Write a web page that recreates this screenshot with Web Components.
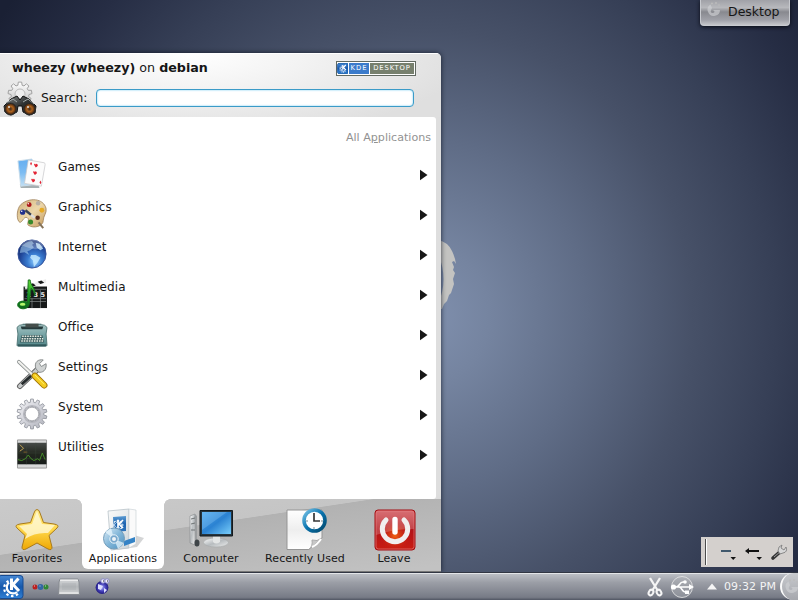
<!DOCTYPE html>
<html lang="en"><head><meta charset="utf-8"><title>KDE Desktop</title>
<style>html,body{margin:0;width:798px;height:600px;overflow:hidden;font-family:"DejaVu Sans",sans-serif;font-size:12px;color:#161616}</style></head>
<body><kde-desktop></kde-desktop>
<script>
const define=(name,html,setup)=>customElements.define(name,class extends HTMLElement{
 constructor(){super();const t=document.createElement('template');t.innerHTML=html;this.attachShadow({mode:'open'}).append(t.content.cloneNode(true));}
 connectedCallback(){if(setup)setup(this,this.shadowRoot);}
});
const gear=(cx,cy,r,n,depth)=>{let p='';for(let i=0;i<n;i++){const a=i*2*Math.PI/n,s=2*Math.PI/n;[[-.34,r-depth],[-.2,r],[.2,r],[.34,r-depth]].forEach(([o,q],j)=>{p+=(i||j?'L':'M')+(cx+q*Math.sin(a+o*s)).toFixed(2)+' '+(cy-q*Math.cos(a+o*s)).toFixed(2)});}return p+'Z';};
const G=(id,a,b,c,x2=0)=>`<linearGradient id="${id}" x1="0" y1="0" x2="${x2}" y2="1"><stop stop-color="${a}"/><stop offset=".5" stop-color="${b}"/><stop offset="1" stop-color="${c||b}"/></linearGradient>`;
const icons={
search:[34,34,`<defs>${G('a','#fff','#ddd','#bbb')}${G('b','#8a8d8d','#303333','#0c0d0d',1)}<radialGradient id="c"><stop stop-color="#3b2a20"/><stop offset=".45" stop-color="#b0641d"/><stop offset=".75" stop-color="#653815"/><stop offset="1" stop-color="#111"/></radialGradient></defs>
<path d="${gear(17,12,12,9,3)}" fill="url(#a)" stroke="#a1a1a1"/><circle cx="17" cy="12" r="5" fill="#eee" stroke="#bbb"/>
<path d="M8 17L14 14L17 18L20 14L26 17L33 24L32 31L26 33L20 30L19 24H15L14 30L8 33L2 30L1 24Z" fill="url(#b)" stroke="#111"/><path d="M3 21L10 17L14 20M20 20L25 17L31 22" stroke="#a3aaaa" fill="none"/><circle cx="7.5" cy="27" r="6" fill="url(#c)" stroke="#303232"/><circle cx="26.5" cy="27" r="6" fill="url(#c)" stroke="#303232"/><circle cx="6" cy="25" r="1" fill="#ddd"/><circle cx="25" cy="25" r="1" fill="#ddd"/>`],
games:[32,32,`<defs>${G('a','#64aef0','#7cbcf2','#c2dff3')}</defs><path d="M3 27L23 28L24 31L4 31Z" fill="#a6afb1"/><path d="M1 2L16 0L21 27L4 29Z" fill="url(#a)" stroke="#c8dcea"/><path d="M12 1L29 4Q30 4 30 6L26 29L8 26Z" fill="#fcfcfc" stroke="#c9c9cc" stroke-width=".8"/><g fill="#e32535"><path id="h" d="M20 9Q17 5 19 5Q20 5 20 6Q21 4 22 6Q23 7 20 9Z"/><use href="#h" x="-1" y="8"/><use href="#h" x="-3" y="16"/><path d="M14 5l1-2 1 2-1 2ZM24 25l1-2 1 2-1 2Z"/></g>`],
graphics:[32,32,`<defs>${G('a','#d0b27b','#ecd7aa','#c59a5c',1)}</defs><path d="M4 6C13-2 28-1 31 10C32 15 28 18 28 23C28 29 18 32 12 28C10 26 14 22 11 20C7 17 5 28 2 24C-1 20 0 10 4 6Z" fill="url(#a)" stroke="#9a7950" stroke-width=".8"/><circle cx="13" cy="6" r="2.6" fill="#ad1b1b"/><circle cx="22.5" cy="4.5" r="2.4" fill="#b8b0a4"/><circle cx="26.5" cy="12" r="2.6" fill="#e6aa24"/><circle cx="6" cy="14" r="2.8" fill="#20308e"/><circle cx="22" cy="20" r="2.4" fill="#582b1b"/><circle cx="14.5" cy="24.5" r="2.7" fill="#388a2b"/><path d="M9 12L15 17" stroke="#374055" stroke-width="2.6"/><path d="M15 17L19 20" stroke="#ddd" stroke-width="2.4"/><path d="M23 25L28 31" stroke="#86745b" stroke-width="2.2"/><circle cx="12" cy="5" r=".8" fill="#fff"/><circle cx="5" cy="13" r=".8" fill="#fff"/>`],
internet:[32,32,`<defs><radialGradient id="a" cx=".6" cy=".75" r=".75"><stop stop-color="#8fcdff"/><stop offset=".35" stop-color="#3a7cd0"/><stop offset=".7" stop-color="#214799"/><stop offset="1" stop-color="#102766"/></radialGradient></defs><circle cx="16" cy="16" r="15" fill="url(#a)" stroke="#345098"/><path d="M4 9Q9 2 16 2L18 5L16 6L18 9L14 12L11 13L13 17L8 14L3 15Z" fill="#a8d4f3" opacity=".55"/><path d="M20 4L24 5L28 10L25 12L21 9ZM15 17L20 17L25 20L22 25L18 30L17 23L14 20Z" fill="#c9ecff" opacity=".8"/><path d="M4 7C12-2 25-1 28 8C19 15 9 7 4 7Z" fill="#fff" opacity=".25"/>`],
multimedia:[32,32,`<defs>${G('a','#66df37','#20992a','#0a6518')}</defs><path d="M7 8H32V31H7Z" fill="#161919"/><path d="M8 8L31 0V4L9 11Z" fill="#eee"/><path d="M13 6L17 4.5L20 7L16 8.5ZM22 3L26 1.6L29 4L25 5.4Z" fill="#171919"/><path d="M8 11H31M8 21H31M8 24H31M16 21V31M25 12V31" stroke="#8a8f8f" stroke-width=".7"/><text x="10" y="19.5" font-size="7" font-family="DejaVu Sans" font-weight="bold" fill="#e8e8e8" textLength="20">2 3 5</text><path d="M12 1H14C14 7 21 10 19 18C18 11 15 10 15 10L13 27C12 33 3 33 1 29C-1 24 7 22 11 25Z" fill="url(#a)" stroke="#15701d"/><ellipse cx="6" cy="27" rx="3" ry="1.6" fill="#b3f86b"/>`],
office:[32,32,`<defs>${G('a','#a5c4c3','#74a2a4','#54878a')}</defs><path d="M6 5H26V13H6Z" fill="#567b7c"/><path d="M0 9Q2 6 6 6H26Q30 6 32 9L31 16L32 28Q32 29 30 29H2Q0 29 0 28L1 16Z" fill="url(#a)" stroke="#527878"/><path d="M4 8H28L27 11H5Z" fill="#263b3c"/><path d="M9 9H23V5H9Z" fill="#454f4c"/><path d="M5 17H27L29 25H3Z" fill="#3f6062"/><g stroke="#e7ebe3" stroke-width="1.6" stroke-dasharray="1.7 1"><path d="M5.5 18.5H27M5 21H28M4.5 23.5H28"/></g><path d="M1 28H31" stroke="#31585b" stroke-width="2"/>`],
settings:[32,32,`<path d="M3 29L23 10" stroke="#666" stroke-width="6" stroke-linecap="round"/><path d="M3 29L23 10" stroke="#c9cccc" stroke-width="3.8" stroke-linecap="round"/><path d="M5 27L16 17" stroke="#252b2c" stroke-width="3"/><path d="M20 10C18 3 23 0 28 1L24 5L26 8L31 5C32 12 27 15 23 14Z" fill="#d0d3d3" stroke="#838888"/><path d="M2 3L20 20" stroke="#8e9393" stroke-width="4" stroke-linecap="round"/><path d="M2 3L20 20" stroke="#f1f1ee" stroke-width="2.3" stroke-linecap="round"/><path d="M19 18L29 28" stroke="#a17608" stroke-width="7" stroke-linecap="round"/><path d="M19 18L29 28" stroke="#f4cc20" stroke-width="5" stroke-linecap="round"/><path d="M19 17L29 27" stroke="#fff06c"/>`],
system:[32,32,`<defs>${G('a','#f2f2f5','#d2d3da','#aeb0b9',1)}</defs><path d="${gear(16,16,16,14,3.5)}M24 16A8 8 0 1 0 8 16A8 8 0 1 0 24 16Z" fill="url(#a)" fill-rule="evenodd" stroke="#92959e" stroke-width=".9"/><circle cx="16" cy="16" r="8.9" fill="none" stroke="#b5b6bd" stroke-width="1.5"/><circle cx="16" cy="16" r="7.2" fill="#fff" stroke="#898b93" stroke-width=".7"/>`],
utilities:[32,32,`<defs>${G('a','#474b49','#23281f','#171c1a')}</defs><path d="M.5 1H31.5V31H.5Z" fill="#d8d9d9" stroke="#999"/><path d="M.5 4H31.5V27H.5Z" fill="url(#a)"/><path d="M3 6L7 10L3 13" fill="none" stroke="#c8a653" stroke-width="1"/><path d="M7 14H11" stroke="#8b6429"/><path d="M1 15H31M1 21H31M10 4V27M20 4V27" stroke="#3f4c3e" stroke-width=".4"/><path d="M1 22L5 23L9 21L12 17L15 21L18 23L22 21L24 23L27 15L30 22" fill="none" stroke="#48902a"/>`],
favorites:[44,44,`<defs>${G('a','#ffe98a','#ffd84a','#eea703')}</defs><path d="M22 1.5Q24 1.5 25 5L28.5 14.5L39 16Q45 17 42 20L34 27.5L37 39Q37 43 33 41L22 35L11 41Q7 43 7 39L10 27.5L2 20Q-1 17 5 16L15.5 14.5L19 5Q20 1.5 22 1.5Z" fill="url(#a)" stroke="#a87a1c" stroke-width="1"/><path d="M22 3L27 16L40 17L33 25Q20 24 10 31L12 26L4 18L17 16Z" fill="#fffce4" opacity=".72"/>`],
applications:[44,44,`<defs>${G('a','#f8f9f9','#e8eced','#c9d3d8',1)}${G('b','#5b9bd2','#1b62af','#3177bc')}${G('c','#ddedf7','#83b7d9','#498fbe',1)}</defs><path d="M33 27L43 30L36 39L15 42Z" fill="#b0b3b5" opacity=".55"/><path d="M7 3L28 1V40L10 42Z" fill="url(#a)" stroke="#b9c3c9" stroke-width=".8"/><path d="M28 1L35 2V36L28 40Z" fill="#fafafa" stroke="#c4ccd1" stroke-width=".6"/><path d="M12 9L25 8V23L13 24Z" fill="url(#b)"/><path d="${gear(17,17,5,8,2)}" fill="none" stroke="#d3e6f5"/><path d="M17 12V20M22 12L18 16L22 20" stroke="#fff" stroke-width="1.7"/><path d="M23 33L34 29V34L23 38Z" fill="#3483c6"/><circle cx="13" cy="30.500" r="10.500" fill="url(#c)" stroke="#719cba"/><path d="M13 31L4 24L10 20ZM13 31L23 35L17 41Z" fill="#edfaff" opacity=".7"/><circle cx="13" cy="31" r="4.2" fill="#77a8cd" stroke="#e9f4fa"/><circle cx="13" cy="31" r="2" fill="#eef4f7"/>`],
computer:[44,44,`<defs>${G('a','#4ba8ef','#2b82d2','#78cdfa',1)}${G('b','#fff','#b7bcbf','#eee',1)}</defs><ellipse cx="27" cy="34.500" rx="12.500" ry="4.5" fill="url(#b)" stroke="#a4a8a8" stroke-width=".6"/><path d="M24 28H31V34Q27 37 24 34Z" fill="#e3e5e5"/><path d="M1 8L6 6V37L1 35Z" fill="url(#b)" stroke="#8e9192" stroke-width=".7"/><path d="M6 6L8 8V39L6 37Z" fill="#9a9d9f"/><path d="M2 11L6 10M2 16L6 15M2 22L6 22" stroke="#707576"/><path d="M11 2.500H43.500V28H11Z" fill="#26353e" stroke="#13191d"/><path d="M13 4H42V26H13Z" fill="url(#a)"/><path d="M13 22L38 4H13Z" fill="#b2e0ff" opacity=".24"/><ellipse cx="8" cy="35" rx="2.5" ry="3.5" fill="#3f4549"/>`],
recent:[44,44,`<defs>${G('a','#fff','#eee','#fff')}${G('b','#76c2e7','#0872ad','#03486c',1)}</defs><path d="M4 2H39V30L26 41.500H4Z" fill="url(#a)" stroke="#959595"/><path d="M26 41.500Q30 38 29 32Q34 34 39 30Z" fill="#c7c7c7" stroke="#aaa"/><path d="M29 39Q34 37 38 31" fill="none" stroke="#fff" stroke-width="2"/><circle cx="31.500" cy="12.5" r="10.500" fill="#fff" stroke="url(#b)" stroke-width="3.600"/><path d="M31 5V13H37" fill="none" stroke="#363636" stroke-width="1.700"/><g fill="#637985"><circle cx="24" cy="13" r=".8"/><circle cx="39" cy="13" r=".8"/><circle cx="31" cy="20" r=".8"/></g>`],
leave:[44,44,`<defs>${G('a','#cf4c52','#b3141a','#c91d12')}<radialGradient id="b" cy=".65" r=".4"><stop stop-color="#f06414"/><stop offset="1" stop-color="#d02010" stop-opacity="0"/></radialGradient></defs><rect x="2" y="2" width="40" height="40" rx="3" fill="url(#a)" stroke="#a30d12"/><rect x="3" y="3" width="38" height="38" fill="url(#b)"/><path d="M3 5Q3 3 5 3H39Q41 3 41 5V21Q23 20 3 27Z" fill="#fff" opacity=".2"/><path d="M13 12A12.700 12.700 0 1 0 31 12" fill="none" stroke="#f1eeee" stroke-width="5" stroke-linecap="round"/><path d="M22 11.500V24" stroke="#fff" stroke-width="5.4" stroke-linecap="round"/><rect x="3" y="3" width="38" height="38" rx="2.5" fill="none" stroke="#e58b8b" opacity=".6"/>`],
kde:[24,24,`<defs>${G('a','#4688d4','#1558ac','#3080d4')}</defs><rect x="-2" y=".5" width="25" height="23" rx="3" fill="url(#a)" stroke="#174a91"/><path d="M9 7.500A6 6 0 1 0 17 17" fill="none" stroke="#fff" stroke-width="2.200"/><path d="M8.500 6A8 8 0 1 0 18.500 18" fill="none" stroke="#fff" stroke-width="2.200" stroke-dasharray="2.400 2.600"/><path d="M11.500 3.500V15M18.500 3.500L13 9.500L19 16" stroke="#fff" stroke-width="3" fill="none"/>`],
dots:[17,8,`<circle cx="3" cy="4" r="2.5" fill="#ba2020"/><circle cx="8.5" cy="4" r="2.9" fill="#3266a3"/><circle cx="14" cy="4" r="2.5" fill="#308735"/><path d="M2 3h1M7.5 3h1M13 3h1" stroke="#fff" opacity=".7"/>`],
folder:[22,18,`<defs>${G('a','#d6d8da','#b4b7ba','#d0d2d4')}</defs><path d="M2 1H20L21 4L21.500 16.5H.5L1 4Z" fill="url(#a)" stroke="#878b91"/><path d="M2 2.2H20M1.500 15H20.500" stroke="#f6f6f6"/><path d="M4 5H18V12H4Z" fill="#989ba0" opacity=".2"/>`],
web:[17,17,`<defs><radialGradient id="a"><stop stop-color="#a6a6f4"/><stop offset=".6" stop-color="#433fb9"/><stop offset="1" stop-color="#221b81"/></radialGradient></defs><circle cx="7" cy="9.5" r="6.4" fill="url(#a)"/><path d="M3 6L8 8L6 12L3 11ZM9 10L12 12L9 15Z" fill="#dedfff"/><circle cx="8" cy="3" r="2.2" fill="#f3f3ff" stroke="#8886c7"/><circle cx="12" cy="3" r="2.2" fill="#f3f3ff" stroke="#8886c7"/><path d="M8 3h1M12 3h1" stroke="#222"/>`],
scissors:[16,20,`<path d="M3 1L11 14M13 1L5 14" stroke="#f5f5f5" stroke-width="2.3" fill="none"/><ellipse cx="4" cy="15.5" rx="2.2" ry="2.9" transform="rotate(30 4 15.5)" stroke="#f5f5f5" stroke-width="2" fill="none"/><ellipse cx="12" cy="15.5" rx="2.2" ry="2.9" transform="rotate(-30 12 15.5)" stroke="#f5f5f5" stroke-width="2" fill="none"/>`],
usb:[24,24,`<circle cx="12" cy="12" r="10.5" fill="#aeb1b6" fill-opacity=".4" stroke="#e8e8e8" stroke-width=".8"/><path d="M2 12H20M6 12C10 12 9 7 13 7H15M9 12C12 12 12 17 15 17H17" stroke="#fff" stroke-width="1.5" fill="none"/><circle cx="3.500" cy="12" r="2.6" fill="#fff"/><path d="M19 9L24 12L19 15ZM15 15.500h4v3.500h-4Z" fill="#fff"/><circle cx="15" cy="7" r="1.800" fill="#fff"/>`],
cashew:[18,18,`<path d="M15 8.5A6.2 6.2 0 1 1 5.5 3.5L7 7Q4 12 8 12Q11 11 8 9H15Z" fill="#d0d1d4" opacity=".65"/><circle cx="7" cy="2.5" r="1" fill="#bbb"/><circle cx="11" cy="2" r="1" fill="#bbb"/><circle cx="14" cy="4" r=".8" fill="#bbb"/>`],
minus:[18,18,`<path d="M2 8H12" stroke="#40586c" stroke-width="2"/><path d="M11.5 14H17L14.2 17Z" fill="#111"/>`],
back:[18,18,`<path d="M3 8H14" stroke="#111" stroke-width="2"/><path d="M0 8L4 5V11Z" fill="#111"/><path d="M11.5 14H17L14.2 17Z" fill="#111"/>`],
wrench:[18,18,`<path d="M2 15L10 8" stroke="#333" stroke-width="3.6" stroke-linecap="round"/><path d="M3 14L10 8" stroke="#9b9b9b" stroke-width="1"/><path d="M7 8Q7 3 11 2L10 5L13 7L15 4Q17 9 12 10L9 11Z" fill="#d7d7d7" stroke="#777" stroke-width=".8"/>`],
arrow:[8,12,`<path d="M0 .8L7.500 6L0 11.2Z" fill="#161616"/>`],
up:[12,8,`<path d="M6 .5L11 6.500H1Z" fill="#f5f5f5"/>`]
};
define('ui-icon',`<style>:host{display:block;flex:none}svg{display:block;overflow:visible}</style><svg fill="none"></svg>`,(h,r)=>{const d=icons[h.getAttribute('name')],s=r.querySelector('svg');s.setAttribute('viewBox',`0 0 ${d[0]} ${d[1]}`);s.setAttribute('width',h.getAttribute('w')||d[0]);s.setAttribute('height',h.getAttribute('h')||d[1]);s.innerHTML=d[2];});
define('menu-item',`<style>:host{display:flex;height:40px;align-items:flex-start;padding:0 8px 0 17px;box-sizing:border-box}span{line-height:16px;margin:2px auto 0 11px;letter-spacing:.1px}.i{margin-top:1.5px}.a{margin-top:12px}</style><ui-icon class="i" w="30" h="30"></ui-icon><span><slot></slot></span><ui-icon class="a" name="arrow"></ui-icon>`);
define('menu-list',`<style>:host{display:block}</style><div></div>`,(h,r)=>{['Games','Graphics','Internet','Multimedia','Office','Settings','System','Utilities'].forEach(n=>{const e=document.createElement('menu-item');e.textContent=n;e.shadowRoot.querySelector('.i').setAttribute('name',n.toLowerCase());r.querySelector('div').append(e);});});
define('menu-tab',`<style>:host{display:flex;flex-direction:column;align-items:center;box-sizing:border-box;height:70px;padding-top:9px;font-size:11px;white-space:nowrap}:host([active]){background:radial-gradient(circle at 0 6px,transparent 0,transparent 0),#fff;border-radius:0 0 6px 6px}span{line-height:14px;letter-spacing:.1px}</style><slot name="icon"></slot><span><slot></slot></span>`);
define('kde-badge',`<style>:host{display:flex;box-sizing:border-box;width:80px;height:15px;border:1px solid #626a62;background:#fff;padding:1px;gap:1px;color:#fff;font-size:6.8px;line-height:11px}.k{width:10px;background:#347fc5}.b{width:20px;background:#3b7bcb;letter-spacing:1px;text-align:center}.d{flex:1;background:#77806e;letter-spacing:.9px;text-align:center;white-space:nowrap}</style><ui-icon class="k" name="kde" w="10" h="11"></ui-icon><span class="b">KDE</span><span class="d">DESKTOP</span>`);
define('kick-off',`<style>
:host{display:flex;flex-direction:column;width:441px;height:519px;border-radius:0 5px 0 0;overflow:hidden;background:linear-gradient(#dedede,#dedede 85%,#b9b9b9);box-shadow:0 0 5px #0b101bcc}
header{height:64px;background:radial-gradient(ellipse 280px 85px at 190px 0,#fff,#f3f3f3 40%,#dfdfdf);border-top:1px solid #fff;box-sizing:border-box}
.who{display:flex;justify-content:space-between;height:28px;padding:6px 25px 0 12px;box-sizing:border-box;font-size:12.7px;line-height:16px}kde-badge{margin-top:1px}
.find{display:flex;align-items:center;height:33px;padding-left:3px}.find span{font-size:12.3px;margin:-2px 0 0 4px;width:47px;white-space:nowrap}.box{box-sizing:border-box;width:318px;height:18px;margin-left:8px;margin-top:-1px;border:1.5px solid #3b9bc8;border-radius:4px;background:#fff;box-shadow:inset 0 0 2px #65c6ee}
main{height:382px;width:436px;background:#fff;border-radius:0 3px 3px 0;box-sizing:border-box}.crumb{height:40px;padding:14px 5px 0;text-align:right;font-size:11.1px;line-height:14px;color:#929292;box-sizing:border-box}u{text-underline-offset:1px}
nav{display:grid;grid-template-columns:82px 82px 94px 94px 84px;height:73px;position:relative;background:linear-gradient(#0000 98%,#777 98%),linear-gradient(171.500deg,#cacaca 0,#c5c5c5 40%,#b2b2b2 40.500%,#c2c2c2 95%)}
.corner{position:absolute;top:0;width:6px;height:6px;left:76px;background:radial-gradient(circle at 0 6px,#0000 5.500px,#fff 6px)}.corner.r{left:164px;background:radial-gradient(circle at 6px 6px,#0000 5.500px,#fff 6px)}
</style><header><div class="who"><span><b>wheezy (wheezy)</b> on <b>debian</b></span><kde-badge></kde-badge></div><div class="find"><ui-icon name="search"></ui-icon><span>Search:</span><div class="box"></div></div></header><main><div class="crumb">All A<u>p</u>plications</div><menu-list></menu-list></main><nav>
<menu-tab style="padding-right:8px"><ui-icon slot="icon" name="favorites"></ui-icon>Favorites</menu-tab><menu-tab active><ui-icon slot="icon" name="applications"></ui-icon>Applications</menu-tab><menu-tab><ui-icon slot="icon" name="computer"></ui-icon>Computer</menu-tab><menu-tab><ui-icon slot="icon" name="recent"></ui-icon>Recently Used</menu-tab><menu-tab><ui-icon slot="icon" name="leave" style="margin-left:2px"></ui-icon>Leave</menu-tab><i class="corner"></i><i class="corner r"></i></nav>`);
define('task-bar',`<style>:host{display:flex;align-items:center;box-sizing:border-box;width:798px;height:28px;border-top:1px solid #313643;box-shadow:inset 0 1px #e3e5e8;background:linear-gradient(#bfc2c8,#9b9ea6 35%,#777b86 90%,#505562);overflow:hidden;color:#f4f4f4;font-size:11px}.s{flex:1}.dots{margin-left:8px}.f{margin-left:9px}.w{margin-left:15px}.u{margin-left:7px}.up{margin-left:12px}.clock{letter-spacing:.1px;margin:-1px 3px 0 6px;width:53px;white-space:nowrap}.c{width:18px;height:27px;box-sizing:border-box;border-left:2px solid #fafafa;border-radius:14px 0 0 14px;background:linear-gradient(#c8cace,#a5a7ad);padding:5px 0 0 1px;overflow:hidden}</style><ui-icon name="kde"></ui-icon><ui-icon class="dots" name="dots"></ui-icon><ui-icon class="f" name="folder"></ui-icon><ui-icon class="w" name="web"></ui-icon><span class="s"></span><ui-icon name="scissors"></ui-icon><ui-icon class="u" name="usb"></ui-icon><ui-icon class="up" name="up"></ui-icon><span class="clock">09:32 PM</span><div class="c"><ui-icon name="cashew"></ui-icon></div>`);
define('desk-button',`<style>:host{display:flex;box-sizing:border-box;width:90px;height:26px;padding:1px 5px 0 4px;border:1px solid #c9cbd0;border-top:0;border-radius:0 0 4px 4px;background:linear-gradient(#a0a1a7,#b7b8bc 30%,#88898f 48%,#a0a1a8 80%,#c5c6ca);box-shadow:0 1px 4px #080b14;font-size:12.5px}span{line-height:22px;margin-left:5px}</style><ui-icon name="cashew"></ui-icon><span>Desktop</span>`);
define('mini-panel',`<style>:host{display:flex;align-items:center;width:92px;height:30px;background:#d4d0cd;box-sizing:border-box;padding-left:4px}.g{height:26px;width:1px;background:#4c4c4c;border-right:1px solid #fff;margin-right:12px}.b{margin-left:8px}.w{margin-left:8px}</style><div class="g"></div><ui-icon name="minus"></ui-icon><ui-icon class="b" name="back"></ui-icon><ui-icon class="w" name="wrench"></ui-icon>`);
define('kde-desktop',`<style>:host{display:block;position:relative;width:798px;height:600px;overflow:hidden;background:radial-gradient(ellipse 430px 460px at 425px 315px,#8090ae 0,#7584a0 15%,#5f6c86 38%,#475168 62%,#363f56 82%,#262d44 100%,#1a2034 118%)}.moon,kick-off,task-bar,desk-button,mini-panel{position:absolute}.moon{left:430px;top:238px}kick-off{left:0;top:53px}task-bar{left:0;bottom:0}desk-button{left:700px;top:0}mini-panel{left:701px;top:537px}</style>
<svg class="moon" width="28" height="74"><path d="M8 2Q18 4 22 13Q25 19 26 26L24 23L22 24L24 29L23 32L25 35L23 41L24 46L21 55L19 57L17 63L14 66L12 71L8 71L8 66Q19 42 8 15Z" fill="#c3c3c1"/></svg><kick-off></kick-off><task-bar></task-bar><desk-button></desk-button><mini-panel></mini-panel>`);
</script></body></html>
